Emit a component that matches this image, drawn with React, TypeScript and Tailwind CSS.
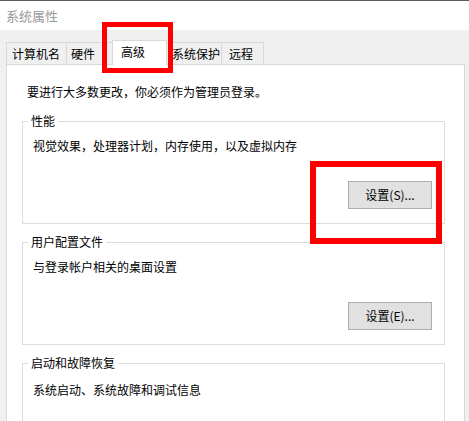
import React from "react";

interface Tab {
  label: string;
  width: string;
  pad: string;
  selected?: boolean;
}

const tabs: Tab[] = [
  { label: "计算机名", width: "w-[61px]", pad: "pl-[5px]" },
  { label: "硬件", width: "w-[47px]", pad: "pl-[4px]" },
  { label: "高级", width: "w-[55px]", pad: "pl-[8px]", selected: true },
  { label: "系统保护", width: "w-[56px]", pad: "pl-[5px]" },
  { label: "远程", width: "w-[43px]", pad: "pl-[7px]" },
];

const SettingsButton: React.FC<{ label: string }> = ({ label }) => (
  <div className="flex justify-end pr-[12px]">
    <button className="w-[84px] h-[28px] bg-[#e1e1e1] border border-[#adadad] text-[12px] leading-[16px] text-black">
      {label}
    </button>
  </div>
);

interface GroupProps {
  title: string;
  text: string;
  textGap: string;
  className?: string;
  children?: React.ReactNode;
}

const Group: React.FC<GroupProps> = ({ title, text, textGap, className = "", children }) => (
  <fieldset className={`border border-[#dcdcdc] w-[423px] ml-[15px] ${className}`}>
    <legend className="ml-[5px] px-[3px] text-[12px] leading-[16px] text-black">{title}</legend>
    <div className={`pl-[10px] text-[12px] leading-[16px] text-black ${textGap}`}>{text}</div>
    {children}
  </fieldset>
);

export default function App() {
  return (
    <div className="relative w-[469px] h-[421px] overflow-hidden bg-[#f0f0f0] font-['Noto_Sans_CJK_SC','Noto_Sans',sans-serif]">
      {/* title bar */}
      <div className="h-[30px] bg-white border-t border-[#5a5a5a] pl-[6px] flex items-center text-[13px] text-[#9a9a9a]">
        系统属性
      </div>

      {/* tabs */}
      <div className="h-[34px] flex items-end pl-[6px]">
        {tabs.map((t, i) =>
          t.selected ? (
            <div
              key={t.label}
              className={`relative z-10 -ml-px -mb-px h-[25px] ${t.width} ${t.pad} pt-[3px] bg-white border border-b-0 border-[#d9d9d9] text-[12px] leading-[16px] text-black`}
            >
              {t.label}
            </div>
          ) : (
            <div
              key={t.label}
              className={`${i > 0 ? "-ml-px" : ""} h-[22px] ${t.width} ${t.pad} flex items-center bg-[#f0f0f0] border border-b-0 border-[#d9d9d9] text-[12px] leading-[16px] text-black`}
            >
              {t.label}
            </div>
          )
        )}
      </div>

      {/* panel */}
      <div className="ml-[6px] w-[459px] h-[400px] bg-white border border-[#d9d9d9] pt-[19px]">
        <div className="pl-[20px] text-[12px] leading-[16px] text-black">
          要进行大多数更改，你必须作为管理员登录。
        </div>

        <Group title="性能" text="视觉效果，处理器计划，内存使用，以及虚拟内存" textGap="mt-[9px]" className="mt-[13px] pb-[14px]">
          <div className="mt-[27px]">
            <SettingsButton label="设置(S)..." />
          </div>
        </Group>

        <Group title="用户配置文件" text="与登录帐户相关的桌面设置" textGap="mt-[9px]" className="mt-[10px] pb-[14px]">
          <div className="mt-[27px]">
            <SettingsButton label="设置(E)..." />
          </div>
        </Group>

        <Group title="启动和故障恢复" text="系统启动、系统故障和调试信息" textGap="mt-[11px]" className="mt-[10px] pb-[80px]" />
      </div>

      {/* red annotation boxes */}
      <div className="absolute left-[102px] top-[22px] w-[71px] h-[51px] border-[5px] border-[#ff0000] z-20" />
      <div className="absolute left-[310px] top-[161px] w-[132px] h-[83px] border-[6px] border-[#ff0000] z-20" />
    </div>
  );
}
